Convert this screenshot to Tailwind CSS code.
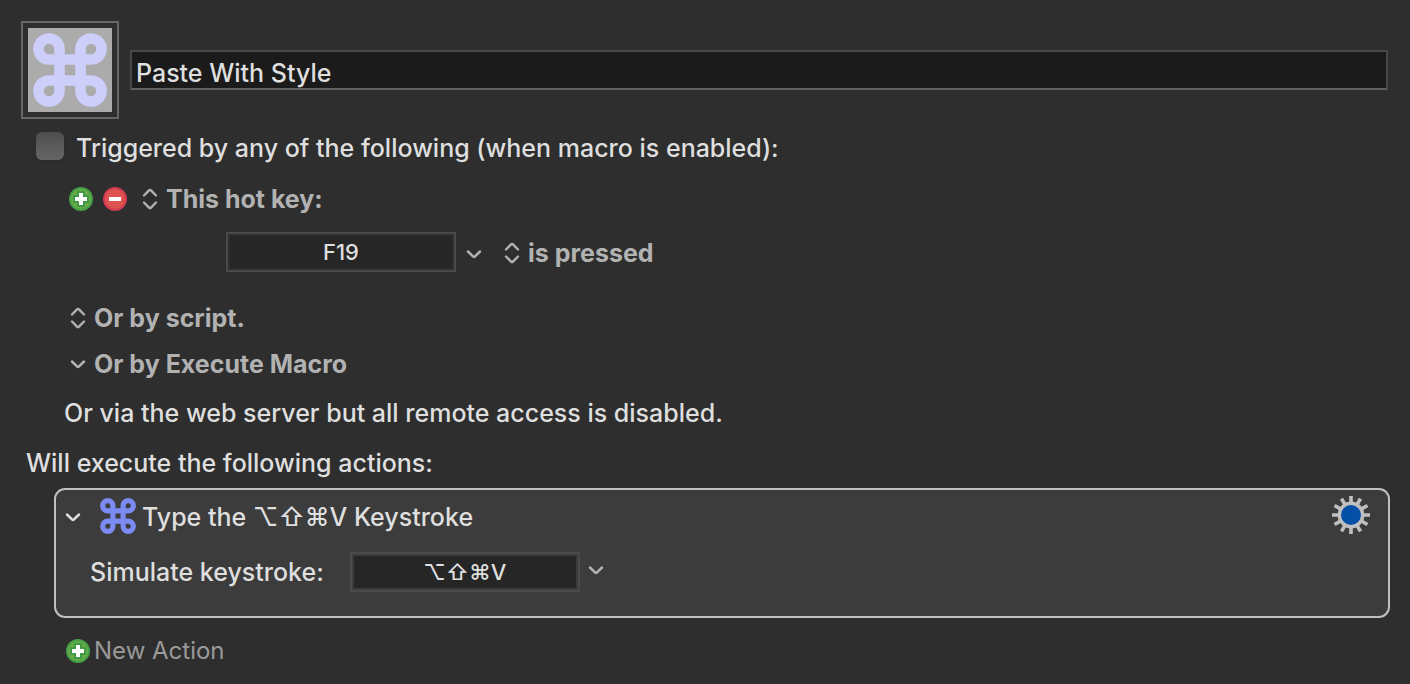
<!DOCTYPE html>
<html lang="en" class="h-full">
  <head>
    <meta charset="UTF-8" />
    <meta name="viewport" content="width=device-width, initial-scale=1.0" />
    <title>Paste With Style</title>
    <script src="https://cdn.jsdelivr.net/npm/@tailwindcss/browser@4"></script>
  </head>

  <body
    class="min-h-full bg-[#2e2e2e] pt-[21px] pb-4 font-['Inter','Liberation_Sans',sans-serif] text-[25px] leading-8 font-medium text-[#dfdfdf]"
  >
    <!-- Shared icons -->
    <svg class="hidden">
      <symbol id="command" viewBox="0 0 74 74">
        <path
          d="M26.5 16A10.5 10.5 0 1 0 16 26.5H58A10.5 10.5 0 1 0 47.5 16V58A10.5 10.5 0 1 0 58 47.5H16A10.5 10.5 0 1 0 26.5 58V16"
          fill="none"
          stroke="currentColor"
          stroke-width="10.6"
        />
      </symbol>
      <symbol id="plus" viewBox="0 0 24 24">
        <circle cx="12" cy="12" r="11" fill="#6aab48" stroke="#43a047" stroke-width="2" />
        <path d="M12 4v16M4 12h16" stroke="#3f9a45" stroke-width="8" />
        <path d="M12 6v12M6 12h12" stroke="#fff" stroke-width="4" />
      </symbol>
      <symbol id="minus" viewBox="0 0 24 24">
        <circle cx="12" cy="12" r="11" fill="#dc5350" stroke="#d23a50" stroke-width="2" />
        <path d="M6 12h12" stroke="#fff" stroke-width="4" />
      </symbol>
      <symbol id="updown" viewBox="0 0 16 24">
        <path
          d="M2 8.5L7 3.4Q8 2.4 9 3.4L14 8.5M2 15.5L7 20.6Q8 21.6 9 20.6L14 15.5"
          fill="none"
          stroke="currentColor"
          stroke-width="2.4"
          stroke-linecap="round"
        />
      </symbol>
      <symbol id="down" viewBox="0 0 16 24">
        <path
          d="M2 9.5L7 14.4Q8 15.4 9 14.4L14 9.5"
          fill="none"
          stroke="currentColor"
          stroke-width="2.5"
          stroke-linecap="round"
        />
      </symbol>
    </svg>

    <!-- Macro icon and name -->
    <header class="flex items-center gap-[11px] pl-[21px] pr-[22px]">
      <button type="button" aria-label="Macro icon" class="size-[98px] shrink-0 border-2 border-[#666] p-[5px]">
        <span class="flex size-full items-center justify-center bg-[#ababab] text-[#cdcffa]">
          <svg class="size-[74px]"><use href="#command" /></svg>
        </span>
      </button>
      <input
        type="text"
        aria-label="Macro name"
        value="Paste With Style"
        class="h-10 min-w-0 flex-1 border-2 border-[#484848] border-b-[#626262] bg-[#1b1b1b] px-1 pt-1.5 outline-none"
      />
    </header>

    <main>
      <!-- Triggers -->
      <section class="pl-9">
        <div class="mt-[13px] flex items-start gap-3">
          <input
            id="triggered"
            type="checkbox"
            class="size-7 appearance-none rounded-md bg-linear-to-b from-[#4e4e4e] to-[#666] shadow-sm"
          />
          <label for="triggered">Triggered by any of the following (when macro is enabled):</label>
        </div>

        <div class="mt-[19px] flex items-center pl-[33px] font-bold text-[#b2b2b2]">
          <button type="button" aria-label="Add trigger"><svg class="size-6"><use href="#plus" /></svg></button>
          <button type="button" aria-label="Remove trigger" class="ml-[10px]"><svg class="size-6"><use href="#minus" /></svg></button>
          <label class="ml-[15px] flex items-center gap-2">
            <svg class="h-6 w-4"><use href="#updown" /></svg>
            <select aria-label="Trigger type" class="appearance-none outline-none">
              <option>This hot key:</option>
            </select>
          </label>
        </div>

        <div class="mt-[17px] flex items-center pl-[190px] font-bold text-[#b2b2b2]">
          <input
            type="text"
            aria-label="Hot key"
            value="F19"
            class="h-10 w-[230px] border-2 border-[#4a4a4a] bg-[#262626] text-center text-[22px] font-medium text-[#dfdfdf] shadow-[inset_0_0_0_2px_#2e2e2e] outline-none"
          />
          <button type="button" aria-label="Hot key options" class="ml-[10px] pt-1"><svg class="h-6 w-4"><use href="#down" /></svg></button>
          <label class="ml-[22px] flex items-center gap-2 pt-0.5">
            <svg class="h-6 w-4"><use href="#updown" /></svg>
            <select aria-label="Hot key event" class="appearance-none outline-none">
              <option>is pressed</option>
            </select>
          </label>
        </div>

        <label class="mt-[30px] flex items-center gap-2 pl-[34px] font-bold text-[#b2b2b2]">
          <svg class="h-6 w-4"><use href="#updown" /></svg>
          <select aria-label="Script trigger" class="appearance-none outline-none">
            <option>Or by script.</option>
          </select>
        </label>

        <label class="mt-[14px] flex items-center gap-2 pl-[34px] font-bold text-[#b2b2b2]">
          <svg class="h-6 w-4"><use href="#down" /></svg>
          <select aria-label="Execute Macro trigger" class="appearance-none outline-none">
            <option>Or by Execute Macro</option>
          </select>
        </label>

        <p class="mt-[17px] pl-7">Or via the web server but all remote access is disabled.</p>
      </section>

      <!-- Actions -->
      <h2 class="mt-[18px] pl-[26px]">Will execute the following actions:</h2>

      <article class="mt-[9px] mr-5 ml-[54px] rounded-[11px] border-2 border-[#c0c0c0] bg-[#3c3c3c] pb-6">
        <div class="flex h-[62px] items-start pt-[11px] pl-[9px] pr-[18px]">
          <button type="button" aria-label="Collapse action" class="flex h-8 items-center">
            <svg class="h-6 w-4"><use href="#down" /></svg>
          </button>
          <svg class="-mt-[3px] ml-[19px] size-9 text-[#7c8bf2]"><use href="#command" /></svg>
          <h3 class="ml-1.5">Type the ⌥⇧⌘V Keystroke</h3>
          <button type="button" aria-label="Action options" class="-mt-[5px] ml-auto">
            <svg class="size-[38px]" viewBox="-19 -19 38 38">
              <g stroke="#c0c0c0" stroke-width="3.6">
                <path d="M0-19V19M-19 0H19" />
                <path d="M0-19V19M-19 0H19" transform="rotate(30)" />
                <path d="M0-19V19M-19 0H19" transform="rotate(60)" />
              </g>
              <circle r="11.7" fill="#0450a6" stroke="#c0c0c0" stroke-width="3.4" />
            </svg>
          </button>
        </div>
        <div class="flex items-center pl-[34px]">
          <label for="keystroke">Simulate keystroke:</label>
          <input
            id="keystroke"
            type="text"
            value="⌥⇧⌘V"
            class="ml-[26px] h-10 w-[230px] border-2 border-[#4a4a4a] bg-[#262626] text-center text-[22px] shadow-[inset_0_0_0_2px_#3c3c3c] outline-none"
          />
          <button type="button" aria-label="Keystroke options" class="ml-2 pb-1 text-[#b2b2b2]">
            <svg class="h-6 w-4"><use href="#down" /></svg>
          </button>
        </div>
      </article>

      <button type="button" class="mt-[17px] ml-[66px] flex items-center gap-1 text-2xl leading-8 font-normal text-[#9a9a9a]">
        <svg class="size-6"><use href="#plus" /></svg>
        New Action
      </button>
    </main>
  </body>
</html>
